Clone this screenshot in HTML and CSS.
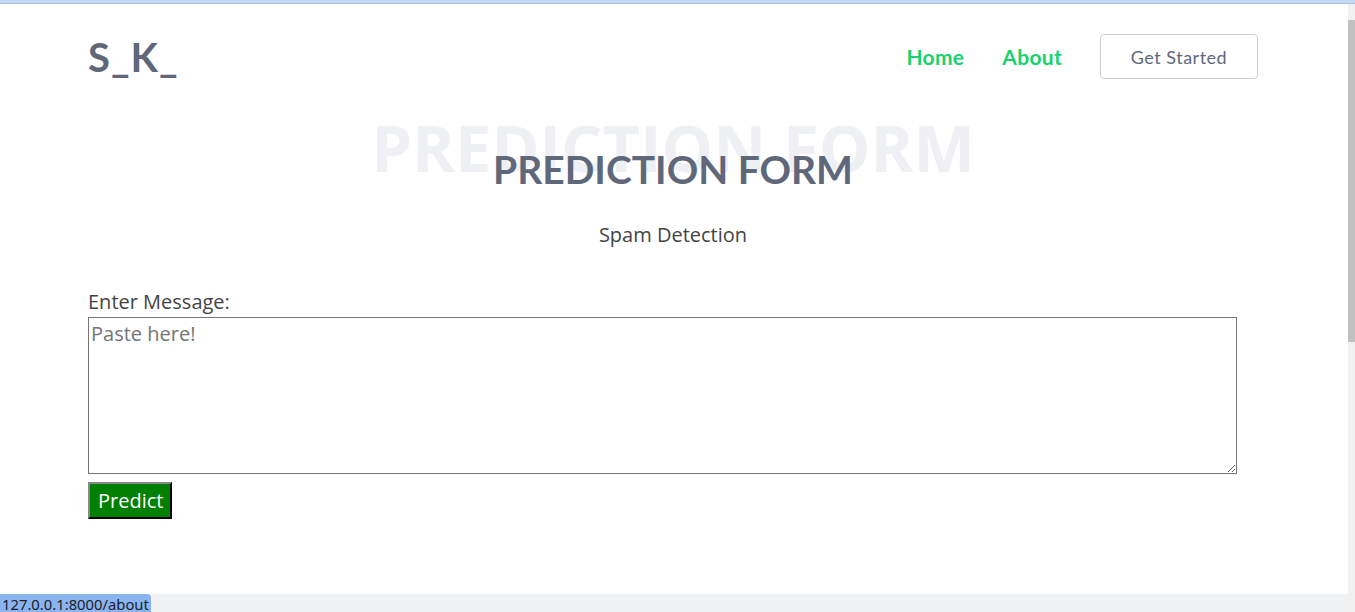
FILE: index.html
```html
<!DOCTYPE html>
<html lang="en">
<head>
<meta charset="utf-8">
<title>Prediction Form</title>
<link rel="stylesheet" href="styles.css">
</head>
<body>
<div class="chrome-top"></div>
<div class="frame">
  <div class="viewport">
    <header class="header">
      <div class="logo">S_K_</div>
      <nav class="nav">
        <a class="nav-link" href="#">Home</a>
        <a class="nav-link" href="#">About</a>
        <a class="btn-start" href="#">Get Started</a>
      </nav>
    </header>
    <section class="form-section">
      <div class="title">
        <div class="title-bg">PREDICTION FORM</div>
        <h2 class="title-main">PREDICTION FORM</h2>
      </div>
      <p class="subtitle">Spam Detection</p>
      <form class="form">
        <label class="label" for="msg">Enter Message:</label>
        <textarea id="msg" class="message" placeholder="Paste here!"></textarea>
        <button type="button" class="predict">Predict</button>
      </form>
    </section>
  </div>
  <div class="scrollbar">
    <div class="scroll-up"></div>
    <div class="scroll-thumb"></div>
    <div class="scroll-rest"></div>
    <div class="scroll-down"></div>
  </div>
</div>
<div class="statusbar">
  <span class="status-url">127.0.0.1:8000/about</span>
</div>
</body>
</html>
```

FILE: styles.css
```css
* { box-sizing: border-box; }
html, body { margin: 0; padding: 0; height: 612px; overflow: hidden; background: #fff; }
body { display: flex; flex-direction: column; font-family: "Open Sans", sans-serif; color: #444; }

.chrome-top { height: 4px; background: #c7daf3; border-bottom: 1px solid #a9c1e3; flex: none; }

.frame { flex: 1; display: flex; min-height: 0; }
.viewport { flex: 1; min-width: 0; padding-left: 88px; }

.header {
  width: 1170px; padding-top: 30px;
  display: flex; align-items: center; justify-content: space-between;
  height: 75px;
}
.logo { font-family: "Lato", sans-serif; font-weight: 700; font-size: 40px; color: #5f687b; letter-spacing: 1px; }
.nav { display: flex; align-items: center; }
.nav-link { font-family: "Lato", sans-serif; font-weight: 700; font-size: 21px; letter-spacing: 0.3px; color: #18d26e; text-decoration: none; margin-right: 38px; }
.btn-start {
  font-family: "Lato", sans-serif; font-size: 18px; letter-spacing: 0.5px; color: #5f687b; text-decoration: none;
  border: 1px solid #cdd0db; border-radius: 4px; width: 158px; height: 45px;
  display: flex; align-items: center; justify-content: center;
}

.form-section { width: 1170px; }
.title { position: relative; text-align: center; padding-top: 67px; height: 142px; }
.title-bg {
  position: absolute; left: 0; right: 0; top: 29px;
  font-family: "Open Sans", sans-serif; font-weight: 700; font-size: 65px; color: #eff0f3; line-height: 1.2;
}
.title-main {
  position: relative; margin: 0; font-family: "Lato", sans-serif; font-weight: 700; font-size: 39px;
  color: #5f687b; line-height: 1.2;
}
.subtitle { text-align: center; margin: 0; font-size: 20px; color: #444; }
.form { margin-top: 41px; display: flex; flex-direction: column; align-items: flex-start; }
.label { font-size: 20px; color: #444; line-height: 26px; }
.message {
  width: 1149px; height: 157px; border: 1px solid #767676; margin: 2px 0 0; padding: 2px 2px;
  font-family: "Open Sans", sans-serif; font-size: 20px; color: #444; resize: both;
}
.message::placeholder { color: #757575; }
.predict {
  margin-top: 8px; background: #008000; color: #fff; font-family: "Open Sans", sans-serif; font-size: 20px;
  border: 2px outset #333; padding: 2px 8px; height: 37px; width: 84px; line-height: 28px;
}

.scrollbar { width: 7px; flex: none; background: #f1f1f1; display: flex; flex-direction: column; }
.scroll-up { height: 16px; }
.scroll-thumb { height: 322px; background: #c1c1c1; }
.scroll-rest { flex: 1; }
.scroll-down { height: 8px; }

.statusbar {
  position: fixed; left: 0; bottom: 0; width: 1348px; height: 18px; background: #f0f1f3;
}
.status-url {
  display: inline-block; height: 18px; width: 151px; background: #8ab4f0; border-top-right-radius: 4px;
  font-family: "Noto Sans", "Open Sans", sans-serif; font-size: 14.8px; line-height: 21px; color: #202124; padding-left: 2px;
  white-space: nowrap; overflow: hidden;
}
```
